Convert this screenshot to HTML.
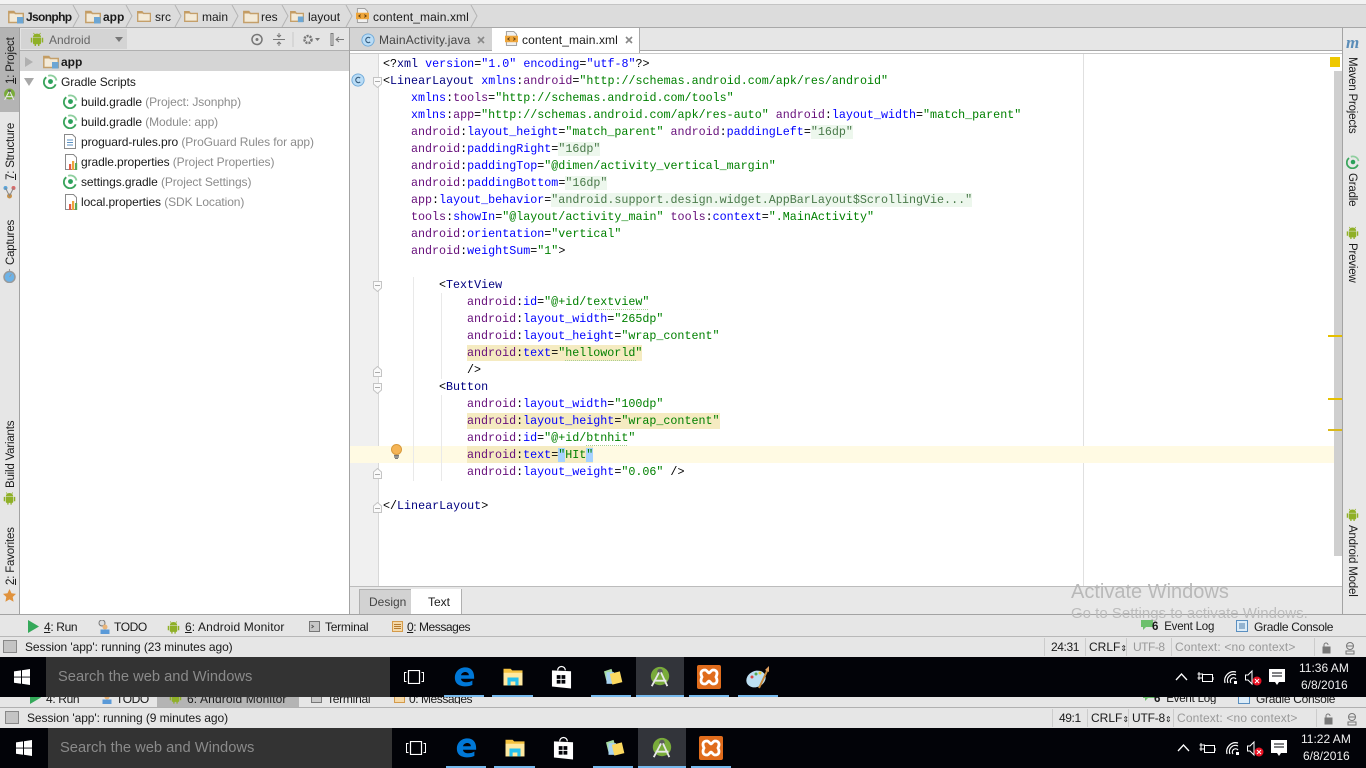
<!DOCTYPE html>
<html><head><meta charset="utf-8"><style>
html,body{margin:0;padding:0;width:1366px;height:768px;overflow:hidden;background:#e6e6e6}
body{position:relative;font-family:"Liberation Sans",sans-serif;font-size:12px;color:#1a1a1a}
div,span.t,svg.i{position:absolute}
.t{white-space:nowrap;line-height:16px;display:block;position:absolute}
.g{color:#8c8c8c}
.v{position:absolute;writing-mode:vertical-rl;white-space:nowrap;line-height:14px;font-size:11.5px;letter-spacing:-.2px}
.r{position:absolute;transform:rotate(-90deg);transform-origin:0 0;white-space:nowrap;line-height:14px;font-size:11.5px;letter-spacing:-.2px}
.p{letter-spacing:-.09px}
.c{position:absolute;font-family:"Liberation Mono",monospace;font-size:11.7px;line-height:17px;height:16px;white-space:pre;color:#000}
.c b{font-weight:normal;color:#000080}.c i{font-style:normal;color:#660e7a}.c u{text-decoration:none;color:#0000ff}.c s{text-decoration:none;color:#008000}
.hg{background:#edf7ed;color:#4a7a4a !important}.hy{background:#f5ebc1}.hb{background:#a6d2ff}
.k{position:absolute;background:#e9e9e9;width:1px}
.sq{position:absolute;height:1px;background:repeating-linear-gradient(90deg,#a8cf90 0 1px,transparent 1px 2px)}
.tb{position:absolute;left:0;width:1366px;height:40px;background:#020308}
.ul{position:absolute;height:2px;background:#76b9ed}
</style></head><body>
<svg width="0" height="0" style="position:absolute"><defs>
<symbol id="andr" viewBox="0 0 14 14"><path fill="#8fb027" d="M3 5.200a4 3.600 0 0 1 8 0zM3 5.800h8v5.400a1 1 0 0 1-1 1H9.400v2H8V12.200H6v2H4.600v-2H4a1 1 0 0 1-1-1zM.8 5.800h1.500v4.700H.8zM11.700 5.800h1.500v4.700h-1.500z"/><path stroke="#8fb027" stroke-width=".8" d="M4.500 2.500L3.500 1M9.500 2.500l1-1.500"/></symbol>
<symbol id="gr" viewBox="0 0 16 16"><path fill="none" stroke="#3ba55d" stroke-width="2" d="M3.500 3.500A6.500 6.500 0 1 0 13.500 11"/><path fill="none" stroke="#8fcf9f" stroke-width="2" d="M5.500 2a6.500 6.500 0 0 1 8.800 5"/><circle cx="8" cy="8" r="2.600" fill="#2aa05a"/></symbol>
<symbol id="fold" viewBox="0 0 16 14"><path fill="#f3ead8" stroke="#c49f6a" stroke-width="1.500" d="M.8 1.500h5l1.500 2h8v9H.8z"/><path fill="#c49c62" d="M.5 1h5l1.500 2.500H.5z"/></symbol>
<symbol id="foldb" viewBox="0 0 16 14"><path fill="#f3ead8" stroke="#c49f6a" stroke-width="1.500" d="M.8 1.500h5l1.500 2h8v9H.8z"/><path fill="#c49c62" d="M.5 1h5l1.500 2.500H.5z"/><rect x="9" y="7" width="6.500" height="6.500" fill="#6ca6d4"/></symbol>
<symbol id="xml" viewBox="0 0 14 16"><path fill="#f0f0f0" stroke="#9a9a9a" d="M1.500.5h8l3 3v12h-11z"/><rect x="0" y="5" width="14" height="7" fill="#eea63c"/><path fill="none" stroke="#5b3a10" d="M5 7l-2 1.500L5 10M9 7l2 1.500L9 10"/></symbol>
<symbol id="cc" viewBox="0 0 16 16"><circle cx="8" cy="8" r="7" fill="#b9dcf6" stroke="#6ca8d8"/><path fill="none" stroke="#3a5f80" stroke-width="1.300" d="M10.500 5.800a3 3 0 1 0 0 4.400"/></symbol>
<symbol id="prop" viewBox="0 0 14 16"><path fill="#fff" stroke="#8a8a8a" d="M1.500.5h8l3 3v12h-11z"/><rect x="5" y="10" width="2.200" height="6" fill="#e05a4a"/><rect x="8" y="7" width="2.200" height="9" fill="#efa43a"/><rect x="11" y="9" width="2.200" height="7" fill="#5aa85a"/></symbol>
<symbol id="fo" viewBox="0 0 9 11"><path fill="#fafafa" stroke="#c4c4c4" d="M.5.500h8v6.500l-4 3.500-4-3.500z"/><path stroke="#aaa" d="M2 4.500h5"/></symbol>
<symbol id="fc" viewBox="0 0 9 11"><path fill="#fafafa" stroke="#c4c4c4" d="M.5 10.500h-0V4l4-3.500 4 3.500v6.500z"/><path stroke="#aaa" d="M2 6.500h5"/></symbol>
<symbol id="e" viewBox="0 0 24 24"><path fill="#0078d7" d="M1 13C1 5 7 1 13 1c6 0 10 4 10 11v2H8c.5 5 9 5 13 2v5c-6 3-20 3-20-8zm7-3h9c0-5-8-5-9 0z"/></symbol>
<symbol id="expl" viewBox="0 0 24 24"><path fill="#f4c23f" d="M0 1h9l2 2h13v19H0z"/><path fill="#ffe9a0" d="M0 6h24v16H0z"/><path fill="#26c0ee" d="M5 12h14v10h-4v-5H9v5H5z"/></symbol>
<symbol id="store" viewBox="0 0 22 24"><path fill="none" stroke="#fff" stroke-width="1.300" d="M7 5a4 4 0 0 1 8 0"/><path fill="#fff" d="M1 5l20 1v18L1 22z"/><path fill="#020308" d="M6 10h4v4H6zM11 10h4v4h-4zM6 15h4v4H6zM11 15h4v4h-4z"/></symbol>
<symbol id="stick" viewBox="0 0 24 24"><path fill="#a6dba0" d="M3 4l9-3 2 6-8 9z"/><path fill="#a8d4f2" d="M6 5h9v14H6z"/><path fill="#fbd960" d="M10 7l12-3 3 13-12 3z"/></symbol>
<symbol id="as" viewBox="0 0 24 24"><circle cx="12" cy="11" r="10" fill="#79ab3a"/><circle cx="12" cy="6" r="3" fill="#5d5d5d"/><path fill="none" stroke="#e8e8e8" stroke-width="2" d="M11 7L3 22M13 7l7 15M5 16h14"/></symbol>
<symbol id="xa" viewBox="0 0 24 24"><rect width="24" height="24" rx="2" fill="#e06c1c"/><path fill="none" stroke="#fff" stroke-width="2.800" d="M8 5C4 5 3 8 5 12 3 16 4 19 8 19c2 0 3-3 4-3s2 3 4 3c4 0 5-3 3-7 2-4 1-7-3-7-2 0-3 3-4 3s-2-3-4-3z"/></symbol>
<symbol id="paint" viewBox="0 0 24 24"><ellipse cx="10" cy="14" rx="10" ry="8" fill="#bcdff2" transform="rotate(-25 10 14)"/><circle cx="6" cy="12" r="1.500" fill="#d44"/><circle cx="10" cy="9" r="1.500" fill="#5a5"/><circle cx="14" cy="8" r="1.500" fill="#ec3"/><path stroke="#c78a3c" stroke-width="2" d="M13 23L22 4"/><path fill="#e0a060" d="M19 5l4-4 0 6z"/></symbol>
<symbol id="win" viewBox="0 0 16 16"><path fill="#fff" d="M0 2.400L7 1.400v6.200H0zM8 1.300L16 0v7.600H8zM0 8.500h7v6.200L0 13.700zM8 8.500h8V16l-8-1.300z"/></symbol>
<symbol id="tray" viewBox="0 0 112 18"><path fill="none" stroke="#fff" stroke-width="1.300" d="M2 11l5.500-6 5.500 6"/><g fill="none" stroke="#fff"><rect x="28.500" y="5.500" width="10" height="7"/><path d="M25 3v8M23.500 5h5v4h-5M39 8v3"/></g><g fill="none" stroke="#fff" stroke-width="1.200"><path d="M51 14A9 9 0 0 1 62 3"/><path d="M54 14a6 6 0 0 1 8-8"/><path d="M57 14a3 3 0 0 1 5-4"/></g><rect x="60" y="12" width="3" height="3" fill="#fff"/><path fill="none" stroke="#fff" d="M71.500 6h2.500l4-4v13l-4-4h-2.500z"/><circle cx="83" cy="12" r="4.500" fill="#e81123"/><path stroke="#fff" d="M81 10l4 4M85 10l-4 4"/><path fill="#fff" d="M95 0h16v13h-6l-2 3-2-3h-6z"/><path stroke="#020308" d="M98 4h10M98 7h10"/></symbol>
<symbol id="task" viewBox="0 0 20 14"><path fill="none" stroke="#fff" d="M2.500 2.500H.5v9h2M17.500 2.500h2v9h-2"/><rect x="4.500" y=".5" width="11" height="13" fill="none" stroke="#fff" stroke-width="1.200"/></symbol>
</defs></svg>

<!-- top -->
<div style="left:0;top:0;width:1366px;height:4px;background:#f2f2f2;border-bottom:1px solid #c4c4c4"></div>
<div style="left:0;top:5px;width:1366px;height:22px;background:#dcdcdc"></div>
<div style="left:0;top:27px;width:1366px;height:1px;background:#a8a8a8"></div>
<svg class="i" style="left:8px;top:10px" width="16" height="14"><use href="#foldb"/></svg><span class="t" style="left:26px;top:9px;font-weight:bold;letter-spacing:-.65px">Jsonphp</span>
<svg class="i" style="left:85px;top:10px" width="16" height="14"><use href="#foldb"/></svg><span class="t" style="left:103px;top:9px;font-weight:bold">app</span>
<svg class="i" style="left:137px;top:10px" width="14" height="13"><use href="#fold"/></svg><span class="t" style="left:155px;top:9px">src</span>
<svg class="i" style="left:184px;top:10px" width="14" height="13"><use href="#fold"/></svg><span class="t" style="left:202px;top:9px">main</span>
<svg class="i" style="left:243px;top:10px" width="16" height="14"><use href="#fold"/></svg><span class="t" style="left:261px;top:9px">res</span>
<svg class="i" style="left:290px;top:10px" width="14" height="13"><use href="#foldb"/></svg><span class="t" style="left:308px;top:9px">layout</span>
<svg class="i" style="left:356px;top:8px" width="13" height="15"><use href="#xml"/></svg><span class="t" style="left:373px;top:9px;letter-spacing:.12px">content_main.xml</span>
<svg class="i" style="left:0;top:5px" width="480" height="22" fill="none" stroke="#b4b4b4"><path d="M73 0l6 11-6 11M126 0l6 11-6 11M175 0l6 11-6 11M232 0l6 11-6 11M282 0l6 11-6 11M346 0l6 11-6 11M471 0l6 11-6 11"/></svg>

<!-- left stripe -->
<div style="left:0;top:28px;width:19px;height:586px;background:#e6e6e6"></div>
<div style="left:0;top:28px;width:19px;height:84px;background:#b4b4b4"></div>
<div style="left:19px;top:28px;width:1px;height:586px;background:#a3a3a3"></div>
<span class="r" style="left:4px;top:84px"><span style="text-decoration:underline">1</span>: Project</span>
<svg class="i" style="left:3px;top:88px" width="13" height="13"><use href="#as"/></svg>
<span class="r" style="left:4px;top:180px"><span style="text-decoration:underline">7</span>: Structure</span>
<svg class="i" style="left:3px;top:185px" width="13" height="14" viewBox="0 0 13 14"><circle cx="2.500" cy="3" r="2" fill="#5aa3d8"/><circle cx="10.500" cy="3" r="2" fill="#d86a6a"/><circle cx="6.500" cy="11" r="2.500" fill="#c8924a"/><path stroke="#888" fill="none" d="M2.500 3l4 8 4-8"/></svg>
<span class="r" style="left:4px;top:265px">Captures</span>
<svg class="i" style="left:3px;top:269px" width="13" height="14" viewBox="0 0 13 14"><circle cx="6.500" cy="8" r="5.500" fill="#6db3e8" stroke="#9a9a9a" stroke-width="1.500"/><path stroke="#9a9a9a" d="M6.500 0v2M6.500 8l2-3"/></svg>
<span class="r" style="left:4px;top:488px">Build Variants</span>
<svg class="i" style="left:3px;top:491px" width="13" height="14"><use href="#andr"/></svg>
<span class="r" style="left:4px;top:585px"><span style="text-decoration:underline">2</span>: Favorites</span>
<svg class="i" style="left:3px;top:589px" width="13" height="13" viewBox="0 0 13 13"><path fill="#e0923c" d="M6.500 0l2 4.300 4.500.6-3.300 3.100.9 4.700-4.100-2.300-4.100 2.300.9-4.700L0 4.900l4.500-.6z"/></svg>

<!-- project panel -->
<div style="left:20px;top:28px;width:329px;height:22px;background:#e4e4e4"></div>
<div style="left:21px;top:29px;width:106px;height:20px;background:#d4d4d4"></div>
<div style="left:20px;top:50px;width:329px;height:1px;background:#b0b0b0"></div>
<div style="left:20px;top:51px;width:329px;height:563px;background:#fff"></div>
<div style="left:20px;top:51px;width:329px;height:20px;background:#d5d5d5"></div>
<div style="left:349px;top:28px;width:1px;height:586px;background:#a3a3a3"></div>
<svg class="i" style="left:30px;top:32px" width="14" height="14"><use href="#andr"/></svg>
<span class="t" style="left:49px;top:32px;color:#666">Android</span>
<svg class="i" style="left:115px;top:37px" width="9" height="5"><path d="M0 0h8L4 5z" fill="#777"/></svg>
<svg class="i" style="left:250px;top:32px" width="100" height="16" viewBox="0 0 100 16" fill="none" stroke="#777"><circle cx="7" cy="7.500" r="5" stroke-width="1.500"/><circle cx="7" cy="7.500" r="1.500" fill="#777" stroke="none"/><path d="M23 7.500h12M29 1v4M29 14v-4M27 3l2 2 2-2M27 12l2-2 2 2"/><path d="M43 0v15" stroke="#c8c8c8"/><circle cx="58" cy="7.500" r="3.500" stroke-width="2.500" stroke-dasharray="2 1"/><path d="M65 6h5l-2.500 3z" fill="#777" stroke="none"/><path d="M81 1.500v12h2v-12zM94 7.500h-8M89 5l-3 2.500 3 2.500"/></svg>
<svg class="i" style="left:25px;top:57px" width="8" height="10"><path d="M0 0l8 5-8 5z" fill="#b0b0b0"/></svg>
<svg class="i" style="left:24px;top:78px" width="10" height="8"><path d="M0 0h10L5 8z" fill="#a8a8a8"/></svg>
<svg class="i" style="left:43px;top:55px" width="16" height="14"><use href="#foldb"/></svg>
<span class="t" style="left:61px;top:54px;font-weight:bold">app</span>
<svg class="i" style="left:43px;top:74px" width="15" height="15"><use href="#gr"/></svg>
<span class="t p" style="left:61px;top:74px">Gradle Scripts</span>
<svg class="i" style="left:63px;top:94px" width="15" height="15"><use href="#gr"/></svg>
<span class="t p" style="left:81px;top:94px">build.gradle <span class="g">(Project: Jsonphp)</span></span>
<svg class="i" style="left:63px;top:114px" width="15" height="15"><use href="#gr"/></svg>
<span class="t p" style="left:81px;top:114px">build.gradle <span class="g">(Module: app)</span></span>
<svg class="i" style="left:64px;top:134px" width="12" height="15" viewBox="0 0 12 15"><path fill="#fff" stroke="#8a8a8a" d="M.5.500h8l3 3v11H.5z"/><path stroke="#5a8fc0" d="M3 6h6M3 8.500h6M3 11h6"/></svg>
<span class="t p" style="left:81px;top:134px">proguard-rules.pro <span class="g">(ProGuard Rules for app)</span></span>
<svg class="i" style="left:64px;top:154px" width="14" height="16"><use href="#prop"/></svg>
<span class="t p" style="left:81px;top:154px">gradle.properties <span class="g">(Project Properties)</span></span>
<svg class="i" style="left:63px;top:174px" width="15" height="15"><use href="#gr"/></svg>
<span class="t p" style="left:81px;top:174px">settings.gradle <span class="g">(Project Settings)</span></span>
<svg class="i" style="left:64px;top:194px" width="14" height="16"><use href="#prop"/></svg>
<span class="t p" style="left:81px;top:194px">local.properties <span class="g">(SDK Location)</span></span>

<!-- editor tabs -->
<div style="left:350px;top:28px;width:992px;height:22px;background:#e6e6e6"></div>
<div style="left:350px;top:28px;width:142px;height:22px;background:#d4d4d4"></div>
<div style="left:350px;top:50px;width:992px;height:1px;background:#a8a8a8"></div>
<div style="left:350px;top:51px;width:992px;height:3px;background:#fff"></div>
<div style="left:492px;top:28px;width:148px;height:25px;background:#fff;border-right:1px solid #aaa;box-sizing:border-box"></div>
<svg class="i" style="left:361px;top:33px" width="14" height="14"><use href="#cc"/></svg>
<span class="t" style="left:379px;top:32px;color:#444;letter-spacing:.18px">MainActivity.java</span>
<svg class="i" style="left:477px;top:36px" width="8" height="8"><path d="M1 1l6 6M7 1L1 7" stroke="#888" stroke-width="1.600"/></svg>
<svg class="i" style="left:505px;top:31px" width="13" height="15"><use href="#xml"/></svg>
<span class="t" style="left:522px;top:32px;letter-spacing:.12px">content_main.xml</span>
<svg class="i" style="left:625px;top:36px" width="8" height="8"><path d="M1 1l6 6M7 1L1 7" stroke="#888" stroke-width="1.600"/></svg>

<!-- editor -->
<div style="left:350px;top:53px;width:992px;height:1px;background:#c8c8c8"></div>
<div style="left:350px;top:54px;width:992px;height:533px;background:#fff"></div>
<div style="left:350px;top:54px;width:28px;height:533px;background:#f0f0f0"></div>
<div style="left:378px;top:54px;width:1px;height:533px;background:#d8d8d8"></div>
<div style="left:1083px;top:54px;width:1px;height:533px;background:#e0e0e0"></div>
<div style="left:350px;top:446px;width:984px;height:17px;background:#fffae3"></div>
<div class="k" style="left:413px;top:277px;height:204px"></div>
<div class="k" style="left:441px;top:293px;height:86px"></div>
<div class="k" style="left:441px;top:395px;height:86px"></div>

<svg class="i" style="left:351px;top:73px" width="14" height="14"><use href="#cc"/></svg>
<svg class="i" style="left:373px;top:77px" width="9" height="11"><use href="#fo"/></svg>
<svg class="i" style="left:373px;top:281px" width="9" height="11"><use href="#fo"/></svg>
<svg class="i" style="left:373px;top:366px" width="9" height="11"><use href="#fc"/></svg>
<svg class="i" style="left:373px;top:383px" width="9" height="11"><use href="#fo"/></svg>
<svg class="i" style="left:373px;top:468px" width="9" height="11"><use href="#fc"/></svg>
<svg class="i" style="left:373px;top:502px" width="9" height="11"><use href="#fc"/></svg>
<svg class="i" style="left:390px;top:444px" width="13" height="15" viewBox="0 0 13 15"><circle cx="6.500" cy="5.500" r="5" fill="#f5b455" stroke="#d89a3c"/><path stroke="#777" stroke-width="1.300" d="M4 11.500h5M4 13h5M5 14.500h3"/></svg>

<div style="left:0;top:1px;width:0;height:0">
<div class="c" style="left:383px;top:55px">&lt;?<b>xml</b> <u>version</u>=<u>"1.0"</u> <u>encoding</u>=<u>"utf-8"</u>?&gt;</div>
<div class="c" style="left:383px;top:72px">&lt;<b>LinearLayout</b> <u>xmlns</u>:<i>android</i>=<s>"http://schemas.android.com/apk/res/android"</s></div>
<div class="c" style="left:411px;top:89px"><u>xmlns</u>:<i>tools</i>=<s>"http://schemas.android.com/tools"</s></div>
<div class="c" style="left:411px;top:106px"><u>xmlns</u>:<i>app</i>=<s>"http://schemas.android.com/apk/res-auto"</s> <i>android</i>:<u>layout_width</u>=<s>"match_parent"</s></div>
<div class="c" style="left:411px;top:123px"><i>android</i>:<u>layout_height</u>=<s>"match_parent"</s> <i>android</i>:<u>paddingLeft</u>=<s class="hg">"16dp"</s></div>
<div class="c" style="left:411px;top:140px"><i>android</i>:<u>paddingRight</u>=<s class="hg">"16dp"</s></div>
<div class="c" style="left:411px;top:157px"><i>android</i>:<u>paddingTop</u>=<s>"@dimen/activity_vertical_margin"</s></div>
<div class="c" style="left:411px;top:174px"><i>android</i>:<u>paddingBottom</u>=<s class="hg">"16dp"</s></div>
<div class="c" style="left:411px;top:191px"><i>app</i>:<u>layout_behavior</u>=<s class="hg">"android.support.design.widget.AppBarLayout$ScrollingVie..."</s></div>
<div class="c" style="left:411px;top:208px"><i>tools</i>:<u>showIn</u>=<s>"@layout/activity_main"</s> <i>tools</i>:<u>context</u>=<s>".MainActivity"</s></div>
<div class="c" style="left:411px;top:225px"><i>android</i>:<u>orientation</u>=<s>"vertical"</s></div>
<div class="c" style="left:411px;top:242px"><i>android</i>:<u>weightSum</u>=<s>"1"</s>&gt;</div>
<div class="c" style="left:439px;top:276px">&lt;<b>TextView</b></div>
<div class="c" style="left:467px;top:293px"><i>android</i>:<u>id</u>=<s>"@+id/textview"</s></div>
<div class="c" style="left:467px;top:310px"><i>android</i>:<u>layout_width</u>=<s>"265dp"</s></div>
<div class="c" style="left:467px;top:327px"><i>android</i>:<u>layout_height</u>=<s>"wrap_content"</s></div>
<div class="c hy" style="left:467px;top:344px"><i>android</i>:<u>text</u>=<s>"helloworld"</s></div>
<div class="c" style="left:467px;top:361px">/&gt;</div>
<div class="c" style="left:439px;top:378px">&lt;<b>Button</b></div>
<div class="c" style="left:467px;top:395px"><i>android</i>:<u>layout_width</u>=<s>"100dp"</s></div>
<div class="c hy" style="left:467px;top:412px"><i>android</i>:<u>layout_height</u>=<s>"wrap_content"</s></div>
<div class="c" style="left:467px;top:429px"><i>android</i>:<u>id</u>=<s>"@+id/btnhit"</s></div>
<div class="c hy" style="left:467px;top:445px;height:17px;line-height:18px"><i>android</i>:<u>text</u>=<s class="hb">"</s><s>HIt</s><s class="hb">"</s></div>
<div class="c" style="left:467px;top:463px"><i>android</i>:<u>layout_weight</u>=<s>"0.06"</s> /&gt;</div>
<div class="c" style="left:383px;top:497px">&lt;/<b>LinearLayout</b>&gt;</div>
</div>
<div class="sq" style="left:595px;top:309px;width:53px"></div>
<div class="sq" style="left:565px;top:360px;width:71px"></div>
<div class="sq" style="left:586px;top:445px;width:42px"></div>

<!-- scrollbar -->
<div style="left:1334px;top:71px;width:8px;height:485px;background:#cfcfcf"></div>
<div style="left:1330px;top:57px;width:10px;height:10px;background:#eec800"></div>
<div style="left:1328px;top:335px;width:14px;height:2px;background:#e6c000"></div>
<div style="left:1328px;top:398px;width:14px;height:2px;background:#e6c000"></div>
<div style="left:1328px;top:429px;width:14px;height:2px;background:#d9b81a"></div>

<!-- right stripe -->
<div style="left:1342px;top:28px;width:1px;height:586px;background:#a3a3a3"></div>
<div style="left:1343px;top:28px;width:23px;height:586px;background:#e8e8e8"></div>
<span class="t" style="left:1346px;top:34px;color:#5b8db8;font:italic bold 17px/18px 'Liberation Serif',serif">m</span>
<span class="v" style="left:1345px;top:57px">Maven Projects</span>
<svg class="i" style="left:1346px;top:155px" width="14" height="14"><use href="#gr"/></svg>
<span class="v" style="left:1345px;top:173px">Gradle</span>
<svg class="i" style="left:1346px;top:226px" width="13" height="13"><use href="#andr"/></svg>
<span class="v" style="left:1345px;top:243px">Preview</span>
<svg class="i" style="left:1346px;top:508px" width="13" height="13"><use href="#andr"/></svg>
<span class="v" style="left:1345px;top:525px">Android Model</span>

<!-- design/text -->
<div style="left:350px;top:586px;width:992px;height:1px;background:#bcbcbc"></div>
<div style="left:350px;top:587px;width:992px;height:27px;background:#e8e8e8"></div>
<div style="left:359px;top:589px;width:51px;height:25px;background:#d2d2d2;border:1px solid #b0b0b0;border-bottom:0"></div>
<div style="left:411px;top:589px;width:50px;height:25px;background:#fff;border-right:1px solid #b0b0b0"></div>
<span class="t" style="left:369px;top:594px;color:#444">Design</span>
<span class="t" style="left:428px;top:594px">Text</span>

<!-- toolbar 1 -->
<div style="left:0;top:614px;width:1366px;height:1px;background:#a3a3a3"></div>
<div style="left:0;top:615px;width:1366px;height:21px;background:#e6e6e6"></div>
<div style="left:0;top:636px;width:1366px;height:1px;background:#b8b8b8"></div>
<span class="t" style="left:1071px;top:580px;font-size:20px;line-height:24px;color:#b9b9b9">Activate Windows</span>
<span class="t" style="left:1071px;top:605px;font-size:15px;line-height:18px;color:#bcbcbc">Go to Settings to activate Windows.</span>
<svg class="i" style="left:28px;top:620px" width="11" height="13"><path d="M0 0l11 6.500L0 13z" fill="#35a95a"/></svg>
<span class="t" style="left:44px;top:619px;letter-spacing:-.35px"><span style="text-decoration:underline">4</span>: Run</span>
<svg class="i" style="left:97px;top:620px" width="14" height="14" viewBox="0 0 14 14"><circle cx="5" cy="3" r="3" fill="#ddd" stroke="#777"/><circle cx="8" cy="7" r="2.500" fill="#e9b57a"/><rect x="3.500" y="9.500" width="9" height="4.500" fill="#5a9ad8"/></svg>
<span class="t" style="left:114px;top:619px;letter-spacing:-.4px">TODO</span>
<svg class="i" style="left:167px;top:620px" width="13" height="14"><use href="#andr"/></svg>
<span class="t" style="left:185px;top:619px;letter-spacing:.12px"><span style="text-decoration:underline">6</span>: Android Monitor</span>
<svg class="i" style="left:309px;top:621px" width="11" height="11" viewBox="0 0 11 11"><rect x=".5" y=".5" width="10" height="10" fill="#c8c8c8" stroke="#777"/><path d="M2.500 4l2 1.500-2 1.500" stroke="#555" fill="none"/></svg>
<span class="t" style="left:325px;top:619px;letter-spacing:-.25px">Terminal</span>
<svg class="i" style="left:392px;top:621px" width="11" height="11" viewBox="0 0 11 11"><rect x=".5" y=".5" width="10" height="10" fill="#f5d9a8" stroke="#d49a4a"/><path stroke="#b57a30" d="M2 3.500h7M2 5.500h7M2 7.500h7"/></svg>
<span class="t" style="left:407px;top:619px;letter-spacing:-.45px"><span style="text-decoration:underline">0</span>: Messages</span>
<svg class="i" style="left:1141px;top:620px" width="12" height="10"><path d="M0 0h12v7H5L2 10V7H0z" fill="#6dc06d"/></svg>
<span class="t" style="left:1152px;top:619px;font-size:11.500px;letter-spacing:-.2px"><b>6</b>&nbsp; Event Log</span>
<svg class="i" style="left:1236px;top:620px" width="12" height="12" viewBox="0 0 12 12"><rect x=".5" y=".5" width="11" height="11" fill="#dcecf8" stroke="#5a8fc0"/><path stroke="#4a7aa8" d="M3 4h6M3 6h6M3 8h6"/></svg>
<span class="t" style="left:1254px;top:619px;letter-spacing:-.3px">Gradle Console</span>

<!-- status 1 -->
<div style="left:0;top:637px;width:1366px;height:20px;background:#e6e6e6"></div>
<div style="left:3px;top:640px;width:12px;height:11px;background:#c4c4c4;border:1px solid #888"></div>
<span class="t" style="left:25px;top:639px;letter-spacing:-.08px">Session 'app': running (23 minutes ago)</span>
<span class="t" style="left:1051px;top:639px;letter-spacing:-.4px">24:31</span>
<span class="t" style="left:1089px;top:639px">CRLF<span style="font-size:8px">⇕</span></span>
<span class="t" style="left:1133px;top:639px;color:#999;letter-spacing:-.5px">UTF-8</span>
<span class="t" style="left:1175px;top:639px;color:#999;letter-spacing:.15px">Context: &lt;no context&gt;</span>
<div style="left:1044px;top:638px;width:1px;height:18px;background:#ccc"></div>
<div style="left:1085px;top:638px;width:1px;height:18px;background:#ccc"></div>
<div style="left:1126px;top:638px;width:1px;height:18px;background:#ccc"></div>
<div style="left:1171px;top:638px;width:1px;height:18px;background:#ccc"></div>
<div style="left:1314px;top:638px;width:1px;height:18px;background:#ccc"></div>
<svg class="i" style="left:1321px;top:642px" width="38" height="13" viewBox="0 0 38 13" fill="none" stroke="#777"><rect x="2" y="5" width="7" height="6" fill="#777"/><path d="M3 5V3a2 2 0 0 1 4 0"/><circle cx="29" cy="4" r="3.500"/><path d="M25 9h8v3h-8zM26 4h6"/></svg>

<!-- taskbar 1 -->
<div class="tb" style="top:657px"></div>
<svg class="i" style="left:14px;top:669px" width="16" height="16"><use href="#win"/></svg>
<div style="left:46px;top:657px;width:344px;height:40px;background:#333"></div>
<span class="t" style="left:58px;top:669px;font-size:14.700px;color:#8a8a8a">Search the web and Windows</span>
<svg class="i" style="left:404px;top:670px" width="20" height="14"><use href="#task"/></svg>
<svg class="i" style="left:454px;top:666px" width="21" height="22"><use href="#e"/></svg>
<div class="ul" style="left:444px;top:695px;width:40px"></div>
<svg class="i" style="left:502px;top:668px" width="22" height="19"><use href="#expl"/></svg>
<div class="ul" style="left:492px;top:695px;width:41px"></div>
<svg class="i" style="left:551px;top:665px" width="21" height="24"><use href="#store"/></svg>
<svg class="i" style="left:600px;top:668px" width="23" height="20"><use href="#stick"/></svg>
<div class="ul" style="left:591px;top:695px;width:40px"></div>
<div style="left:636px;top:657px;width:48px;height:40px;background:#32343a"></div>
<svg class="i" style="left:649px;top:665px" width="22" height="24"><use href="#as"/></svg>
<div class="ul" style="left:636px;top:695px;width:48px"></div>
<svg class="i" style="left:697px;top:665px" width="24" height="24"><use href="#xa"/></svg>
<div class="ul" style="left:689px;top:695px;width:40px"></div>
<svg class="i" style="left:746px;top:665px" width="24" height="24"><use href="#paint"/></svg>
<div class="ul" style="left:738px;top:695px;width:40px"></div>
<svg class="i" style="left:1174px;top:669px" width="112" height="18"><use href="#tray"/></svg>
<span class="t" style="left:1299px;top:660px;font-size:12px;color:#f0f0f0">11:36 AM</span>
<span class="t" style="left:1301px;top:677px;font-size:12px;color:#f0f0f0">6/8/2016</span>

<!-- toolbar 2 (cut off) -->
<div style="left:0;top:697px;width:1366px;height:31px;background:#e6e6e6"></div>
<div style="left:157px;top:697px;width:142px;height:10px;background:#b4b4b4"></div>
<div style="left:0;top:707px;width:1366px;height:1px;background:#b0b0b0"></div>
<div style="left:0;top:697px;width:1366px;height:7px;overflow:hidden">
<svg class="i" style="left:30px;top:-6px" width="11" height="13"><path d="M0 0l11 6.500L0 13z" fill="#35a95a"/></svg>
<span class="t" style="left:46px;top:-6px;letter-spacing:-.35px"><span style="text-decoration:underline">4</span>: Run</span>
<svg class="i" style="left:99px;top:-7px" width="14" height="14" viewBox="0 0 14 14"><circle cx="8" cy="7" r="2.500" fill="#e9b57a"/><rect x="3.500" y="9.500" width="9" height="4.500" fill="#5a9ad8"/></svg>
<span class="t" style="left:116px;top:-6px;letter-spacing:-.4px">TODO</span>
<svg class="i" style="left:169px;top:-7px" width="13" height="14"><use href="#andr"/></svg>
<span class="t" style="left:187px;top:-6px;letter-spacing:.12px"><span style="text-decoration:underline">6</span>: Android Monitor</span>
<svg class="i" style="left:311px;top:-5px" width="11" height="11" viewBox="0 0 11 11"><rect x=".5" y=".5" width="10" height="10" fill="#c8c8c8" stroke="#777"/></svg>
<span class="t" style="left:327px;top:-6px;letter-spacing:-.25px">Terminal</span>
<svg class="i" style="left:394px;top:-5px" width="11" height="11" viewBox="0 0 11 11"><rect x=".5" y=".5" width="10" height="10" fill="#f5d9a8" stroke="#d49a4a"/></svg>
<span class="t" style="left:409px;top:-6px;letter-spacing:-.45px"><span style="text-decoration:underline">0</span>: Messages</span>
<svg class="i" style="left:1143px;top:-6px" width="12" height="10"><path d="M0 0h12v7H5L2 10V7H0z" fill="#6dc06d"/></svg>
<span class="t" style="left:1154px;top:-6px;font-size:11.500px;letter-spacing:-.2px"><b>6</b>&nbsp; Event Log</span>
<svg class="i" style="left:1238px;top:-5px" width="12" height="12" viewBox="0 0 12 12"><rect x=".5" y=".5" width="11" height="11" fill="#dcecf8" stroke="#5a8fc0"/></svg>
<span class="t" style="left:1256px;top:-6px;letter-spacing:-.3px">Gradle Console</span>
</div>

<!-- status 2 -->
<div style="left:5px;top:711px;width:12px;height:11px;background:#c4c4c4;border:1px solid #888"></div>
<span class="t" style="left:27px;top:710px;letter-spacing:-.08px">Session 'app': running (9 minutes ago)</span>
<span class="t" style="left:1059px;top:710px;letter-spacing:-.4px">49:1</span>
<span class="t" style="left:1091px;top:710px">CRLF<span style="font-size:8px">⇕</span></span>
<span class="t" style="left:1132px;top:710px;letter-spacing:-.2px">UTF-8<span style="font-size:8px">⇕</span></span>
<span class="t" style="left:1177px;top:710px;color:#999;letter-spacing:.15px">Context: &lt;no context&gt;</span>
<div style="left:1052px;top:709px;width:1px;height:18px;background:#ccc"></div>
<div style="left:1087px;top:709px;width:1px;height:18px;background:#ccc"></div>
<div style="left:1128px;top:709px;width:1px;height:18px;background:#ccc"></div>
<div style="left:1173px;top:709px;width:1px;height:18px;background:#ccc"></div>
<div style="left:1316px;top:709px;width:1px;height:18px;background:#ccc"></div>
<svg class="i" style="left:1323px;top:713px" width="38" height="13" viewBox="0 0 38 13" fill="none" stroke="#777"><rect x="2" y="5" width="7" height="6" fill="#777"/><path d="M3 5V3a2 2 0 0 1 4 0"/><circle cx="29" cy="4" r="3.500"/><path d="M25 9h8v3h-8zM26 4h6"/></svg>

<!-- taskbar 2 -->
<div class="tb" style="top:728px"></div>
<svg class="i" style="left:16px;top:740px" width="16" height="16"><use href="#win"/></svg>
<div style="left:48px;top:728px;width:344px;height:40px;background:#333"></div>
<span class="t" style="left:60px;top:740px;font-size:14.700px;color:#8a8a8a">Search the web and Windows</span>
<svg class="i" style="left:406px;top:741px" width="20" height="14"><use href="#task"/></svg>
<svg class="i" style="left:456px;top:737px" width="21" height="22"><use href="#e"/></svg>
<div class="ul" style="left:446px;top:766px;width:40px"></div>
<svg class="i" style="left:504px;top:739px" width="22" height="19"><use href="#expl"/></svg>
<div class="ul" style="left:494px;top:766px;width:41px"></div>
<svg class="i" style="left:553px;top:736px" width="21" height="24"><use href="#store"/></svg>
<svg class="i" style="left:602px;top:739px" width="23" height="20"><use href="#stick"/></svg>
<div class="ul" style="left:593px;top:766px;width:40px"></div>
<div style="left:638px;top:728px;width:48px;height:40px;background:#32343a"></div>
<svg class="i" style="left:651px;top:736px" width="22" height="24"><use href="#as"/></svg>
<div class="ul" style="left:638px;top:766px;width:48px"></div>
<svg class="i" style="left:699px;top:736px" width="24" height="24"><use href="#xa"/></svg>
<div class="ul" style="left:691px;top:766px;width:40px"></div>
<svg class="i" style="left:1176px;top:740px" width="112" height="18"><use href="#tray"/></svg>
<span class="t" style="left:1301px;top:731px;font-size:12px;color:#f0f0f0">11:22 AM</span>
<span class="t" style="left:1303px;top:748px;font-size:12px;color:#f0f0f0">6/8/2016</span>
</body></html>
